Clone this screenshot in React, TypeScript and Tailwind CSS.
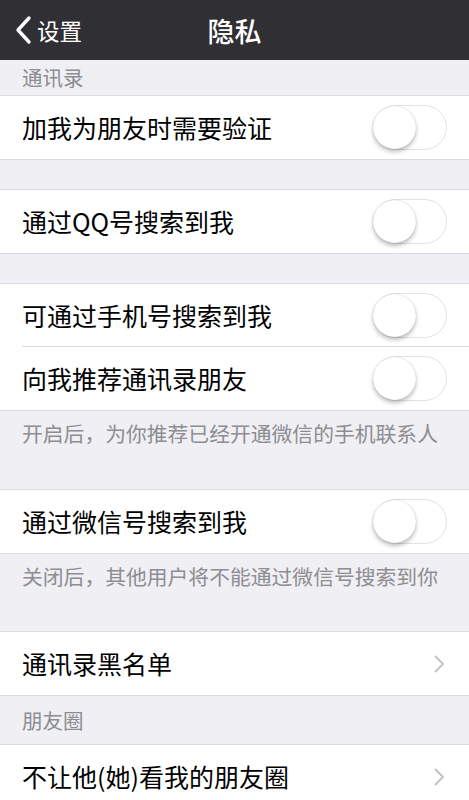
import React from "react";

const font = { fontFamily: '"Noto Sans CJK SC", "Noto Sans", sans-serif' };

function Toggle() {
  return (
    <div className="relative w-[74px] h-[45px] rounded-full border-[1.5px] border-[#e2e2e4] bg-white">
      <div className="absolute left-[-1px] top-[0px] w-[43px] h-[43px] rounded-full bg-white shadow-[0_3px_4px_rgba(0,0,0,0.25),0_0_1px_rgba(0,0,0,0.25)]" />
    </div>
  );
}

function Chevron() {
  return (
    <svg width="12" height="20" viewBox="0 0 12 20" className="mr-[2px]">
      <path d="M2.5 2.5 L10 10 L2.5 17.5" fill="none" stroke="#c4c4c8" strokeWidth="2" strokeLinecap="round" strokeLinejoin="round" />
    </svg>
  );
}

function Row({ label, kind, last = true }: { label: string; kind: "toggle" | "chevron"; last?: boolean }) {
  return (
    <div className="flex h-[63px] items-center pl-[22px]">
      <div className={`flex h-full flex-1 items-center pr-[22px] ${last ? "" : "border-b border-[#dcdce0]"}`}>
        <span className="flex-1 text-[25px] text-black leading-none">{label}</span>
        {kind === "toggle" ? <Toggle /> : <Chevron />}
      </div>
    </div>
  );
}

function Group({ children }: { children: React.ReactNode }) {
  return <div className="bg-white border-y border-[#dcdce0]">{children}</div>;
}

export default function App() {
  return (
    <div className="w-[469px] min-h-[800px] bg-[#efeff4] overflow-hidden" style={font}>
      <div className="relative flex h-[60px] items-center bg-[#302f34] text-white">
        <div className="flex items-center pl-[14px]">
          <svg width="18" height="30" viewBox="0 0 18 30">
            <path d="M15 3 L4 15 L15 27" fill="none" stroke="white" strokeWidth="3.4" strokeLinecap="round" strokeLinejoin="round" />
          </svg>
          <span className="ml-[5px] text-[22.5px] leading-none">设置</span>
        </div>
        <div className="absolute inset-x-0 top-0 flex h-full items-center justify-center pointer-events-none">
          <span className="text-[27px] font-medium leading-none">隐私</span>
        </div>
      </div>

      <div className="flex h-[35px] items-center pl-[22px] text-[20.5px] text-[#8d8d92] leading-none">通讯录</div>
      <Group>
        <Row label="加我为朋友时需要验证" kind="toggle" />
      </Group>
      <div className="h-[29px]" />
      <Group>
        <Row label="通过QQ号搜索到我" kind="toggle" />
      </Group>
      <div className="h-[29px]" />
      <Group>
        <Row label="可通过手机号搜索到我" kind="toggle" last={false} />
        <Row label="向我推荐通讯录朋友" kind="toggle" />
      </Group>
      <div className="h-[78px] pl-[22px] pt-[12px] text-[20.8px] text-[#8d8d92] leading-none">开启后，为你推荐已经开通微信的手机联系人</div>
      <Group>
        <Row label="通过微信号搜索到我" kind="toggle" />
      </Group>
      <div className="h-[77px] pl-[22px] pt-[12px] text-[20.8px] text-[#8d8d92] leading-none">关闭后，其他用户将不能通过微信号搜索到你</div>
      <Group>
        <Row label="通讯录黑名单" kind="chevron" />
      </Group>
      <div className="flex h-[48px] items-center pl-[22px] text-[20.5px] text-[#8d8d92] leading-none">朋友圈</div>
      <Group>
        <Row label="不让他(她)看我的朋友圈" kind="chevron" />
      </Group>
    </div>
  );
}
